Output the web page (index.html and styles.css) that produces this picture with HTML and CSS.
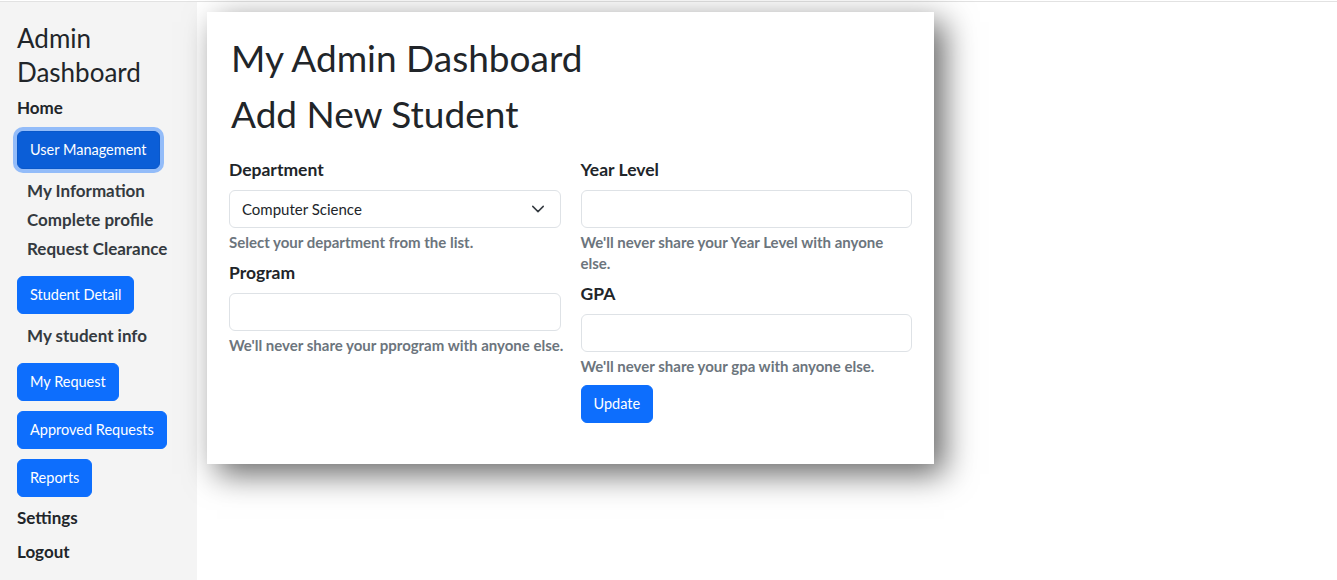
FILE: index.html
```html
<!DOCTYPE html>
<html lang="en">
<head>
<meta charset="utf-8">
<title>Admin Dashboard</title>
<link rel="stylesheet" href="styles.css">
</head>
<body>
<div class="topline"></div>
<div class="layout">
  <aside class="sidebar">
    <h3 class="side-title">Admin Dashboard</h3>
    <a class="side-link" href="#">Home</a>
    <button class="btn btn-focus side-btn first-btn" type="button">User Management</button>
    <ul class="sub-list">
      <li><a href="#">My Information</a></li>
      <li><a href="#">Complete profile</a></li>
      <li><a href="#">Request Clearance</a></li>
    </ul>
    <button class="btn side-btn btn-after-list" type="button">Student Detail</button>
    <ul class="sub-list single">
      <li><a href="#">My student info</a></li>
    </ul>
    <button class="btn side-btn btn-after-list" type="button">My Request</button>
    <button class="btn side-btn btn-next" type="button">Approved Requests</button>
    <button class="btn side-btn btn-next" type="button">Reports</button>
    <a class="side-link settings" href="#">Settings</a>
    <a class="side-link logout" href="#">Logout</a>
  </aside>
  <main class="main">
    <section class="card">
      <h1 class="title">My Admin Dashboard</h1>
      <h1 class="title">Add New Student</h1>
      <form class="form-grid">
        <div class="col">
          <div class="field">
            <label class="form-label">Department</label>
            <div class="select">
              <span>Computer Science</span>
              <svg class="chev" width="16" height="16" viewBox="0 0 16 16"><path d="M2 5l6 6 6-6" fill="none" stroke="#343a40" stroke-width="1.7" stroke-linecap="round" stroke-linejoin="round"/></svg>
            </div>
            <div class="form-text">Select your department from the list.</div>
          </div>
          <div class="field">
            <label class="form-label">Program</label>
            <input class="form-control" type="text">
            <div class="form-text nowrap">We'll never share your pprogram with anyone else.</div>
          </div>
        </div>
        <div class="col">
          <div class="field">
            <label class="form-label">Year Level</label>
            <input class="form-control" type="text">
            <div class="form-text">We'll never share your Year Level with anyone else.</div>
          </div>
          <div class="field">
            <label class="form-label">GPA</label>
            <input class="form-control" type="text">
            <div class="form-text">We'll never share your gpa with anyone else.</div>
          </div>
          <div class="actions">
            <button class="btn" type="button">Update</button>
          </div>
        </div>
      </form>
    </section>
  </main>
</div>
</body>
</html>
```

FILE: styles.css
```css
* { box-sizing: border-box; }
html, body {
  margin: 0;
  padding: 0;
  background: #fff;
  font-family: Lato, "Liberation Sans", sans-serif;
  color: #212529;
  font-size: 16px;
  line-height: 1.5;
}
.topline {
  height: 2px;
  border-bottom: 1px solid #e2e2e2;
}
.layout {
  display: flex;
  min-height: 578px;
}
.sidebar {
  width: 197px;
  flex: none;
  background: #f4f4f4;
  padding: 19px 0 0 17px;
  display: flex;
  flex-direction: column;
  align-items: flex-start;
}
.side-title {
  font-size: 26px;
  font-weight: 400;
  line-height: 34px;
  margin: 0 0 7px;
  color: #212529;
}
.side-link {
  font-size: 17px;
  font-weight: 700;
  color: #212529;
  text-decoration: none;
  line-height: 24px;
}
.side-link.settings { margin-top: 9px; }
.side-link.logout { margin-top: 10px; }
.btn {
  display: inline-block;
  font-family: inherit;
  font-size: 14.5px;
  line-height: 24px;
  padding: 6px 12px;
  border: 1px solid #0d6efd;
  background: #0d6efd;
  color: #fff;
  border-radius: 6px;
  cursor: pointer;
}
.btn-focus {
  background: #0b5ed7;
  border-color: #0a58ca;
  box-shadow: 0 0 0 4px rgba(49, 132, 253, 0.5);
}
.first-btn { margin-top: 10.5px; }
.btn-after-list { margin-top: 13.5px; }
.btn-next { margin-top: 10px; }
.sub-list {
  list-style: none;
  margin: 7px 0 0;
  padding: 0 0 0 10px;
}
.sub-list.single { margin-top: 6.5px; }
.sub-list li { line-height: 29px; }
.sub-list a {
  font-size: 17px;
  color: #343a40;
  font-weight: 700;
  text-decoration: none;
}
.main {
  flex: 1;
  padding: 10px;
}
.card {
  width: 727px;
  background: #fff;
  padding: 22px;
  box-shadow: 10px 10px 30px rgba(0, 0, 0, 0.6);
}
.title {
  font-size: 37px;
  font-weight: 400;
  line-height: 48px;
  margin: 0 0 8px;
  padding-left: 2px;
}
.form-grid {
  display: grid;
  grid-template-columns: minmax(0, 1fr) minmax(0, 1fr);
  column-gap: 20px;
  padding-top: 12px;
  margin-bottom: 19px;
}
.field { margin-bottom: 8px; }
.form-label {
  display: block;
  font-size: 17.5px;
  font-weight: 700;
  line-height: 24px;
  margin-bottom: 8px;
}
.form-control, .select {
  display: block;
  width: 100%;
  height: 38px;
  border: 1px solid #dee2e6;
  border-radius: 6px;
  background: #fff;
  font-family: inherit;
  font-size: 15px;
  padding: 6px 12px;
}
.select {
  display: flex;
  align-items: center;
  justify-content: space-between;
  line-height: 24px;
}
.chev { width: 14px; height: 14px; margin-right: 3px; }
.form-text {
  margin-top: 4px;
  font-size: 15px;
  line-height: 21px;
  font-weight: 700;
  color: #6c757d;
}
.nowrap { white-space: nowrap; }
.actions { display: flex; }
```
